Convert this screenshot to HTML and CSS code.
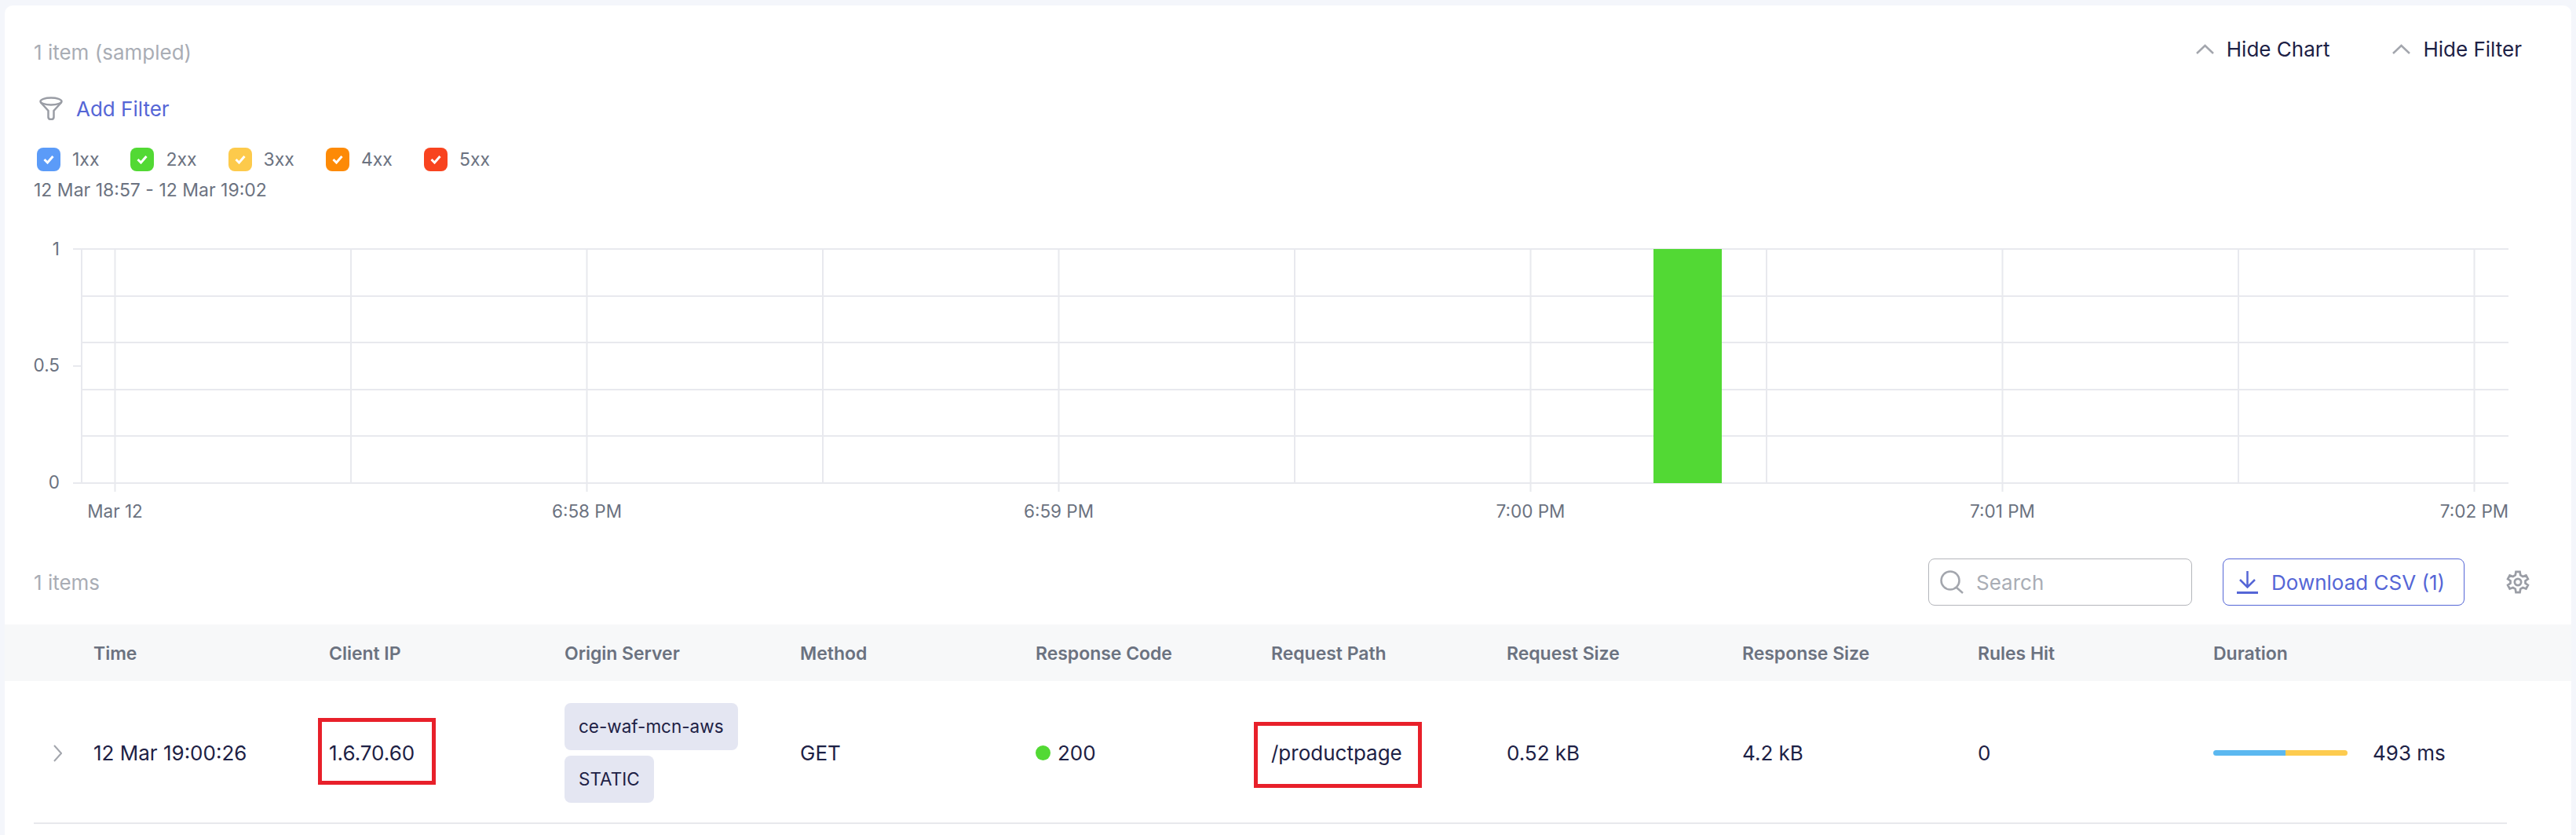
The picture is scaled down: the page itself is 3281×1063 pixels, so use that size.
FILE: index.html
```html
<!DOCTYPE html>
<html>
<head>
    <title>Requests</title>
    <link rel="stylesheet" href="styles.css">
</head>
<body>
    <div class="card">
        <div class="top-bar">
            <span class="summary">1 item (sampled)</span>
            <div class="toggles">
                <a class="toggle">
                    <svg width="23" height="13" viewBox="0 0 23 13"><path d="M1 12 L11.5 2 L22 12" fill="none" stroke="#a3a6ad" stroke-width="2.5"/></svg>
                    Hide Chart
                </a>
                <a class="toggle">
                    <svg width="23" height="13" viewBox="0 0 23 13"><path d="M1 12 L11.5 2 L22 12" fill="none" stroke="#a3a6ad" stroke-width="2.5"/></svg>
                    Hide Filter
                </a>
            </div>
        </div>

        <div class="add-filter">
            <svg width="30" height="30" viewBox="0 0 30 30" fill="none" stroke="#9a9da5" stroke-width="2.5">
                <ellipse cx="15" cy="6" rx="13.500" ry="4.500"/>
                <path d="M1.500 7 L11.500 18 V26 Q11.500 29 15 29 Q18.500 29 18.500 26 V18 L28.500 7"/>
            </svg>
            <a>Add Filter</a>
        </div>

        <!-- status code legend -->
        <div class="legend">
            <label class="legend-item"><span class="check check-1xx"><svg width="14" height="12" viewBox="0 0 14 12"><path d="M1.500 6 L5.500 10 L12.500 2" fill="none" stroke="#fff" stroke-width="3"/></svg></span>1xx</label>
            <label class="legend-item"><span class="check check-2xx"><svg width="14" height="12" viewBox="0 0 14 12"><path d="M1.500 6 L5.500 10 L12.500 2" fill="none" stroke="#fff" stroke-width="3"/></svg></span>2xx</label>
            <label class="legend-item"><span class="check check-3xx"><svg width="14" height="12" viewBox="0 0 14 12"><path d="M1.500 6 L5.500 10 L12.500 2" fill="none" stroke="#fff" stroke-width="3"/></svg></span>3xx</label>
            <label class="legend-item"><span class="check check-4xx"><svg width="14" height="12" viewBox="0 0 14 12"><path d="M1.500 6 L5.500 10 L12.500 2" fill="none" stroke="#fff" stroke-width="3"/></svg></span>4xx</label>
            <label class="legend-item"><span class="check check-5xx"><svg width="14" height="12" viewBox="0 0 14 12"><path d="M1.500 6 L5.500 10 L12.500 2" fill="none" stroke="#fff" stroke-width="3"/></svg></span>5xx</label>
        </div>
        <div class="date-range">12 Mar 18:57 - 12 Mar 19:02</div>

        <!-- viewBox uses page coordinates -->
        <svg class="chart" width="3269" height="380" viewBox="6 290 3269 380">
            <g class="grid">
                <path d="M93 317 H3195 M104 377 H3195 M104 436 H3195 M104 496 H3195 M104 555 H3195 M93 615 H3195 M93 466 H104"/>
                <path d="M104 317 V615 M146.500 317 V626 M447 317 V615 M747.500 317 V626 M1048 317 V615 M1348.500 317 V626 M1649 317 V615 M1949.500 317 V626 M2250 317 V615 M2550.500 317 V626 M2851 317 V615 M3151.500 317 V626"/>
            </g>
            <rect x="2106" y="317" width="87" height="298" fill="#52d934"/>
            <g class="axis">
                <text x="76" y="325" text-anchor="end">1</text>
                <text x="76" y="473" text-anchor="end">0.5</text>
                <text x="76" y="622" text-anchor="end">0</text>
                <text x="146.500" y="659" text-anchor="middle">Mar 12</text>
                <text x="747.500" y="659" text-anchor="middle">6:58 PM</text>
                <text x="1348.500" y="659" text-anchor="middle">6:59 PM</text>
                <text x="1949.500" y="659" text-anchor="middle">7:00 PM</text>
                <text x="2550.500" y="659" text-anchor="middle">7:01 PM</text>
                <text x="3151.500" y="659" text-anchor="middle">7:02 PM</text>
            </g>
        </svg>

        <div class="list-bar">
            <span class="summary">1 items</span>
            <div class="search">
                <svg width="31" height="30" viewBox="0 0 31 30" fill="none" stroke="#a3a6ad" stroke-width="2.5">
                    <circle cx="13" cy="13" r="11.500"/>
                    <path d="M21 22 L29 29"/>
                </svg>
                <span>Search</span>
            </div>
            <a class="download">
                <svg width="29" height="30" viewBox="0 0 29 30" fill="none" stroke="#5566d6" stroke-width="2.500">
                    <path d="M14.500 1 V21 M5 12 L14.500 21.500 L24 12"/>
                    <path d="M1 28.500 H28" stroke-width="3"/>
                </svg>
                Download CSV (1)
            </a>
            <svg class="gear" width="30" height="30" viewBox="0 0 24 24" fill="none" stroke="#9a9da5" stroke-width="2.200">
                <path d="M10 1.500 H14 L14.600 5 L17 6.400 L20.300 5.200 L22.300 8.800 L19.600 10.800 V13.200 L22.300 15.200 L20.300 18.800 L17 17.600 L14.600 19 L14 22.500 H10 L9.400 19 L7 17.600 L3.700 18.800 L1.700 15.200 L4.400 13.200 V10.800 L1.700 8.800 L3.700 5.200 L7 6.400 L9.400 5 Z"/>
                <circle cx="12" cy="12" r="3.300"/>
            </svg>
        </div>

        <div class="table-head">
            <span></span>
            <span>Time</span>
            <span>Client IP</span>
            <span>Origin Server</span>
            <span>Method</span>
            <span>Response Code</span>
            <span>Request Path</span>
            <span>Request Size</span>
            <span>Response Size</span>
            <span>Rules Hit</span>
            <span>Duration</span>
        </div>
        <div class="table-row">
            <svg class="expand" width="11" height="22" viewBox="0 0 11 22"><path d="M1 1 L10 11 L1 21" fill="none" stroke="#a3a6ad" stroke-width="2"/></svg>
            <span>12 Mar 19:00:26</span>
            <span class="marked">1.6.70.60<i class="mark mark-ip"></i></span>
            <div class="tags">
                <span class="tag">ce-waf-mcn-aws</span>
                <span class="tag">STATIC</span>
            </div>
            <span>GET</span>
            <span class="status"><i class="dot"></i>200</span>
            <span class="marked">/productpage<i class="mark mark-path"></i></span>
            <span>0.52 kB</span>
            <span>4.2 kB</span>
            <span>0</span>
            <div class="duration">
                <div class="bar"><i class="bar-a"></i><i class="bar-b"></i></div>
                <span>493 ms</span>
            </div>
        </div>
    </div>
</body>
</html>
```

FILE: styles.css
```css
html, body {
    height: 100%;
}

body {
    margin: 0;
    overflow: hidden;
    background-color: #f4f6fb;
    color: #1d2145;
    font-family: Inter, "Liberation Sans", sans-serif;
    font-size: 26px;
}

.card {
    height: 1056px;
    margin: 7px 6px 0 6px;
    background-color: white;
    border-radius: 10px 10px 0 0;
}

.top-bar {
    display: flex;
    justify-content: space-between;
    height: 48px;
    padding: 35px 63px 0 37px;
}

.summary {
    align-self: center;
    color: #a9adb5;
}

.toggles {
    display: flex;
    gap: 80px;
    align-self: flex-start;
    height: 40px;
}

.toggle {
    display: flex;
    align-items: center;
    gap: 16px;
}

.add-filter {
    display: flex;
    align-items: center;
    gap: 17px;
    height: 36px;
    margin: 30px 0 0 44px;
    color: #5566d6;
}

.legend {
    display: flex;
    gap: 40px;
    margin: 32px 0 0 41px;
}

.legend-item {
    display: flex;
    align-items: center;
    gap: 15px;
    color: #6b7280;
    font-size: 23px;
}

.check {
    display: flex;
    align-items: center;
    justify-content: center;
    width: 30px;
    height: 30px;
    border-radius: 8px;
}

.check-1xx { background-color: #5b9bf8; }
.check-2xx { background-color: #52d934; }
.check-3xx { background-color: #fdca4b; }
.check-4xx { background-color: #fd8a06; }
.check-5xx { background-color: #f8431f; }

.date-range {
    margin: 9px 0 0 37px;
    color: #6b7280;
    font-size: 23px;
    line-height: 30px;
}

.chart {
    display: block;
    margin-top: 33px;
}

.grid path {
    fill: none;
    stroke: #e8e9ee;
    stroke-width: 2;
}

.axis text {
    fill: #6b7280;
    font-size: 22.5px;
}

.list-bar {
    display: flex;
    align-items: center;
    height: 60px;
    margin-top: 41px;
    padding: 0 53px 0 37px;
}

.list-bar .summary {
    margin-right: auto;
}

.search {
    display: flex;
    align-items: center;
    gap: 15px;
    box-sizing: border-box;
    width: 336px;
    height: 60px;
    padding-left: 14px;
    border: 1.5px solid #b4b6bb;
    border-radius: 8px;
    color: #a9adb5;
}

.download {
    display: flex;
    align-items: center;
    gap: 16px;
    box-sizing: border-box;
    width: 308px;
    height: 60px;
    margin-left: 39px;
    padding-left: 16px;
    border: 1.5px solid #5566d6;
    border-radius: 8px;
    color: #5566d6;
}

.gear {
    margin-left: 53px;
}

.table-head, .table-row {
    display: grid;
    grid-template-columns: 76px repeat(9, 300px) 1fr;
    align-items: center;
}

.table-head {
    height: 71px;
    margin-top: 24px;
    padding: 1px 82px 0 37px;
    background-color: #f7f8f9;
    color: #6b7280;
    font-size: 23px;
    font-weight: 600;
    letter-spacing: -0.03px;
}

.table-row {
    height: 177px;
    margin: 0 82px 0 37px;
    padding-top: 3px;
    border-bottom: 2px solid #e8e9ec;
}

.expand {
    margin-left: 25px;
}

.tags {
    display: flex;
    flex-direction: column;
    align-items: flex-start;
    gap: 7px;
}

.tag {
    padding: 0 18px;
    border-radius: 8px;
    background-color: #e4e6f2;
    font-size: 22.5px;
    line-height: 60px;
}

.status {
    display: flex;
    align-items: center;
    gap: 9px;
}

.dot {
    width: 19px;
    height: 19px;
    border-radius: 50%;
    background-color: #52d934;
}

.marked {
    position: relative;
    justify-self: start;
}

.mark {
    position: absolute;
    box-sizing: border-box;
    border: 5px solid #e8202a;
}

.mark-ip {
    top: -29px;
    left: -14px;
    width: 150px;
    height: 85px;
}

.mark-path {
    top: -24px;
    left: -22px;
    width: 214px;
    height: 84px;
}

.duration {
    display: flex;
    align-items: center;
    gap: 32px;
}

.bar {
    display: flex;
    width: 171px;
    height: 7px;
    overflow: hidden;
    border-radius: 4px;
}

.bar-a {
    width: 92px;
    background-color: #5bb8f0;
}

.bar-b {
    flex: 1;
    background-color: #fdcb4f;
}
```
